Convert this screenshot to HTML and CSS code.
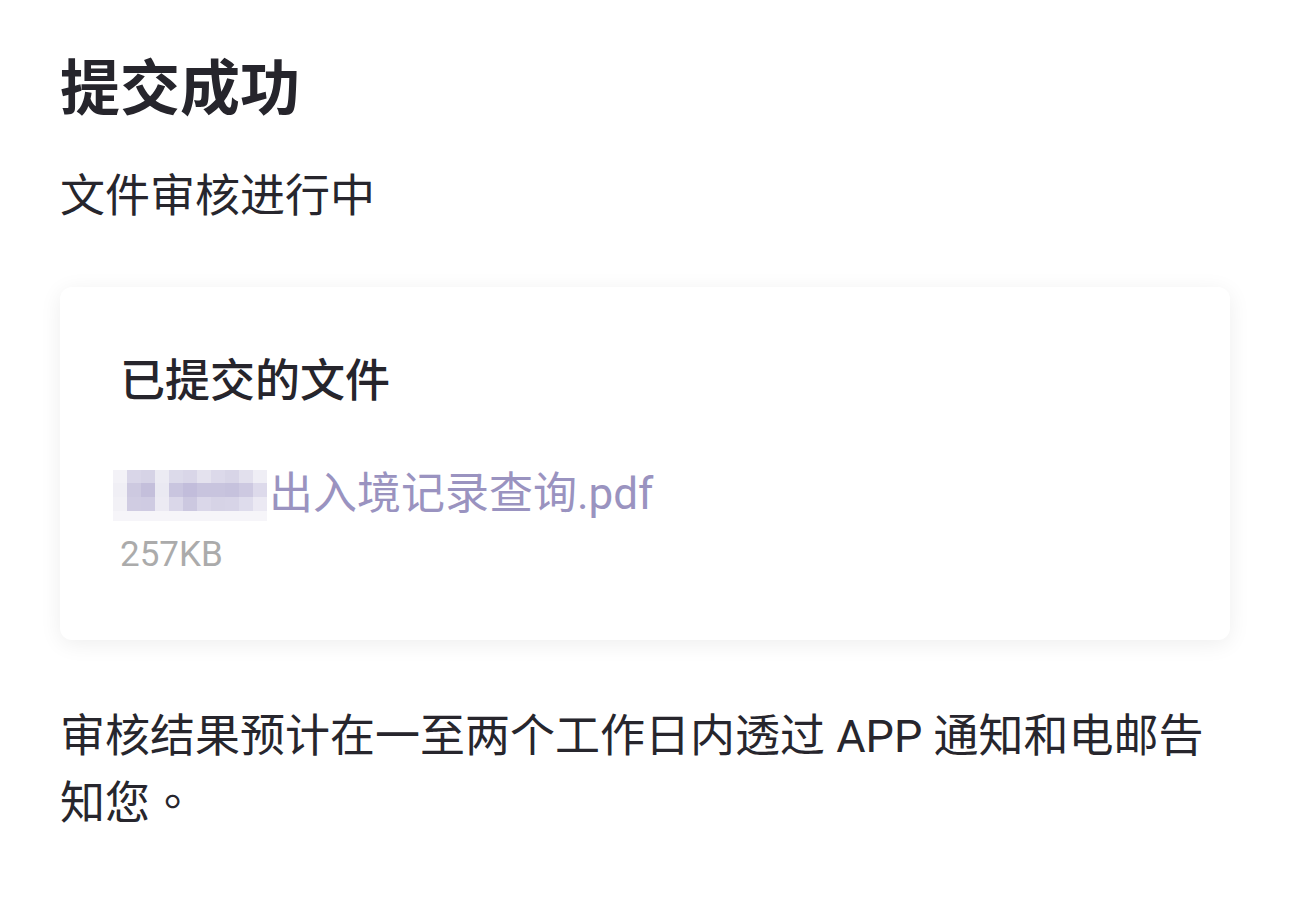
FILE: index.html
```html
<!DOCTYPE html>
<html lang="zh-CN">
<head>
<meta charset="utf-8">
<title>提交成功</title>
<link rel="stylesheet" href="styles.css">
</head>
<body>
<main class="page">
  <h1 class="title">提交成功</h1>
  <p class="subtitle">文件审核进行中</p>

  <section class="card">
    <h2 class="card-title">已提交的文件</h2>
    <div class="file-name">
      <div class="mosaic" aria-hidden="true">
        <span class="m1"></span><span class="m2"></span><span class="m3"></span><span class="m4"></span><span class="m5"></span><span class="m6"></span><span class="m7"></span><span class="m8"></span><span class="m9"></span><span class="m10"></span><span class="m11"></span>
        <span class="n1"></span><span class="n2"></span><span class="n3"></span><span class="n4"></span><span class="n5"></span><span class="n6"></span><span class="n7"></span><span class="n8"></span><span class="n9"></span><span class="n10"></span><span class="n11"></span>
        <span class="o1"></span><span class="o2"></span><span class="o3"></span><span class="o4"></span><span class="o5"></span><span class="o6"></span><span class="o7"></span><span class="o8"></span><span class="o9"></span><span class="o10"></span><span class="o11"></span>
        <span class="p"></span><span class="p"></span><span class="p"></span><span class="p"></span><span class="p"></span><span class="p"></span><span class="p"></span><span class="p"></span><span class="p"></span><span class="p"></span><span class="p"></span>
      </div>
      <span class="file-text">出入境记录查询.pdf</span>
    </div>
    <div class="file-size">257KB</div>
  </section>

  <p class="note">审核结果预计在一至两个工作日内透过 APP 通知和电邮告知您<span class="punct" lang="zh-TW">。</span></p>
</main>
</body>
</html>
```

FILE: styles.css
```css
html, body {
  margin: 0;
  padding: 0;
  background: #ffffff;
}

body {
  font-family: Roboto, "Noto Sans CJK SC", sans-serif;
  color: #27262d;
}

.page {
  padding: 50px 60px 0 60px;
}

.title {
  margin: 0;
  font-size: 60px;
  line-height: 80px;
  font-weight: 700;
  color: #26252c;
}

.subtitle {
  margin: 37px 0 0 0;
  font-size: 45px;
  line-height: 60px;
  font-weight: 400;
}

.card {
  margin-top: 60px;
  background: #ffffff;
  border-radius: 12px;
  box-shadow: 0 4px 22px rgba(0, 0, 0, 0.07);
  padding: 65px 60px 63px 60px;
}

.card-title {
  margin: 0;
  font-size: 45px;
  line-height: 60px;
  font-weight: 500;
  color: #26252c;
}

.file-name {
  margin-top: 52px;
  display: flex;
  align-items: center;
  height: 60px;
}

.file-text {
  font-size: 44px;
  line-height: 60px;
  color: #9a93c0;
  white-space: nowrap;
}

.mosaic {
  display: grid;
  grid-template-columns: repeat(11, 14px);
  grid-template-rows: 13px 14px 14px 10px;
  margin-left: -7px;
  margin-right: 2px;
  margin-top: 2px;
  flex-shrink: 0;
}

.mosaic span { display: block; }

.m1 { background: #f3f2f7; } .m2 { background: #d9d6e8; } .m3 { background: #d6d3e6; } .m4 { background: #ecebf3; }
.m5 { background: #dcdaea; } .m6 { background: #d9d6e8; } .m7 { background: #e4e2ee; } .m8 { background: #dcd9ea; }
.m9 { background: #d8d5e7; } .m10 { background: #e2e0ed; } .m11 { background: #efeef5; }

.n1 { background: #f0eff5; } .n2 { background: #cdc9e0; } .n3 { background: #c4bfdb; } .n4 { background: #eae9f2; }
.n5 { background: #c9c5df; } .n6 { background: #c2bddb; } .n7 { background: #c8c4de; } .n8 { background: #c8c4de; }
.n9 { background: #c6c2dd; } .n10 { background: #cdc9e1; } .n11 { background: #dddaeb; }

.o1 { background: #f2f1f6; } .o2 { background: #d0cce2; } .o3 { background: #cfcbe2; } .o4 { background: #eceaf3; }
.o5 { background: #dad7e9; } .o6 { background: #ccc8e0; } .o7 { background: #dad7e9; } .o8 { background: #d6d3e6; }
.o9 { background: #d7d4e7; } .o10 { background: #dedcec; } .o11 { background: #ebe9f3; }

.p { background: #f6f5f9; }

.file-size {
  margin-top: 9px;
  font-family: Roboto, "Noto Sans", sans-serif;
  font-size: 35px;
  line-height: 44px;
  color: #ababab;
}

.note {
  margin: 65px 0 0 0;
  font-size: 45px;
  line-height: 63px;
  font-weight: 400;
  color: #27262d;
}

.punct {
  font-family: "Noto Sans CJK TC", "Noto Sans CJK SC", sans-serif;
}
```
